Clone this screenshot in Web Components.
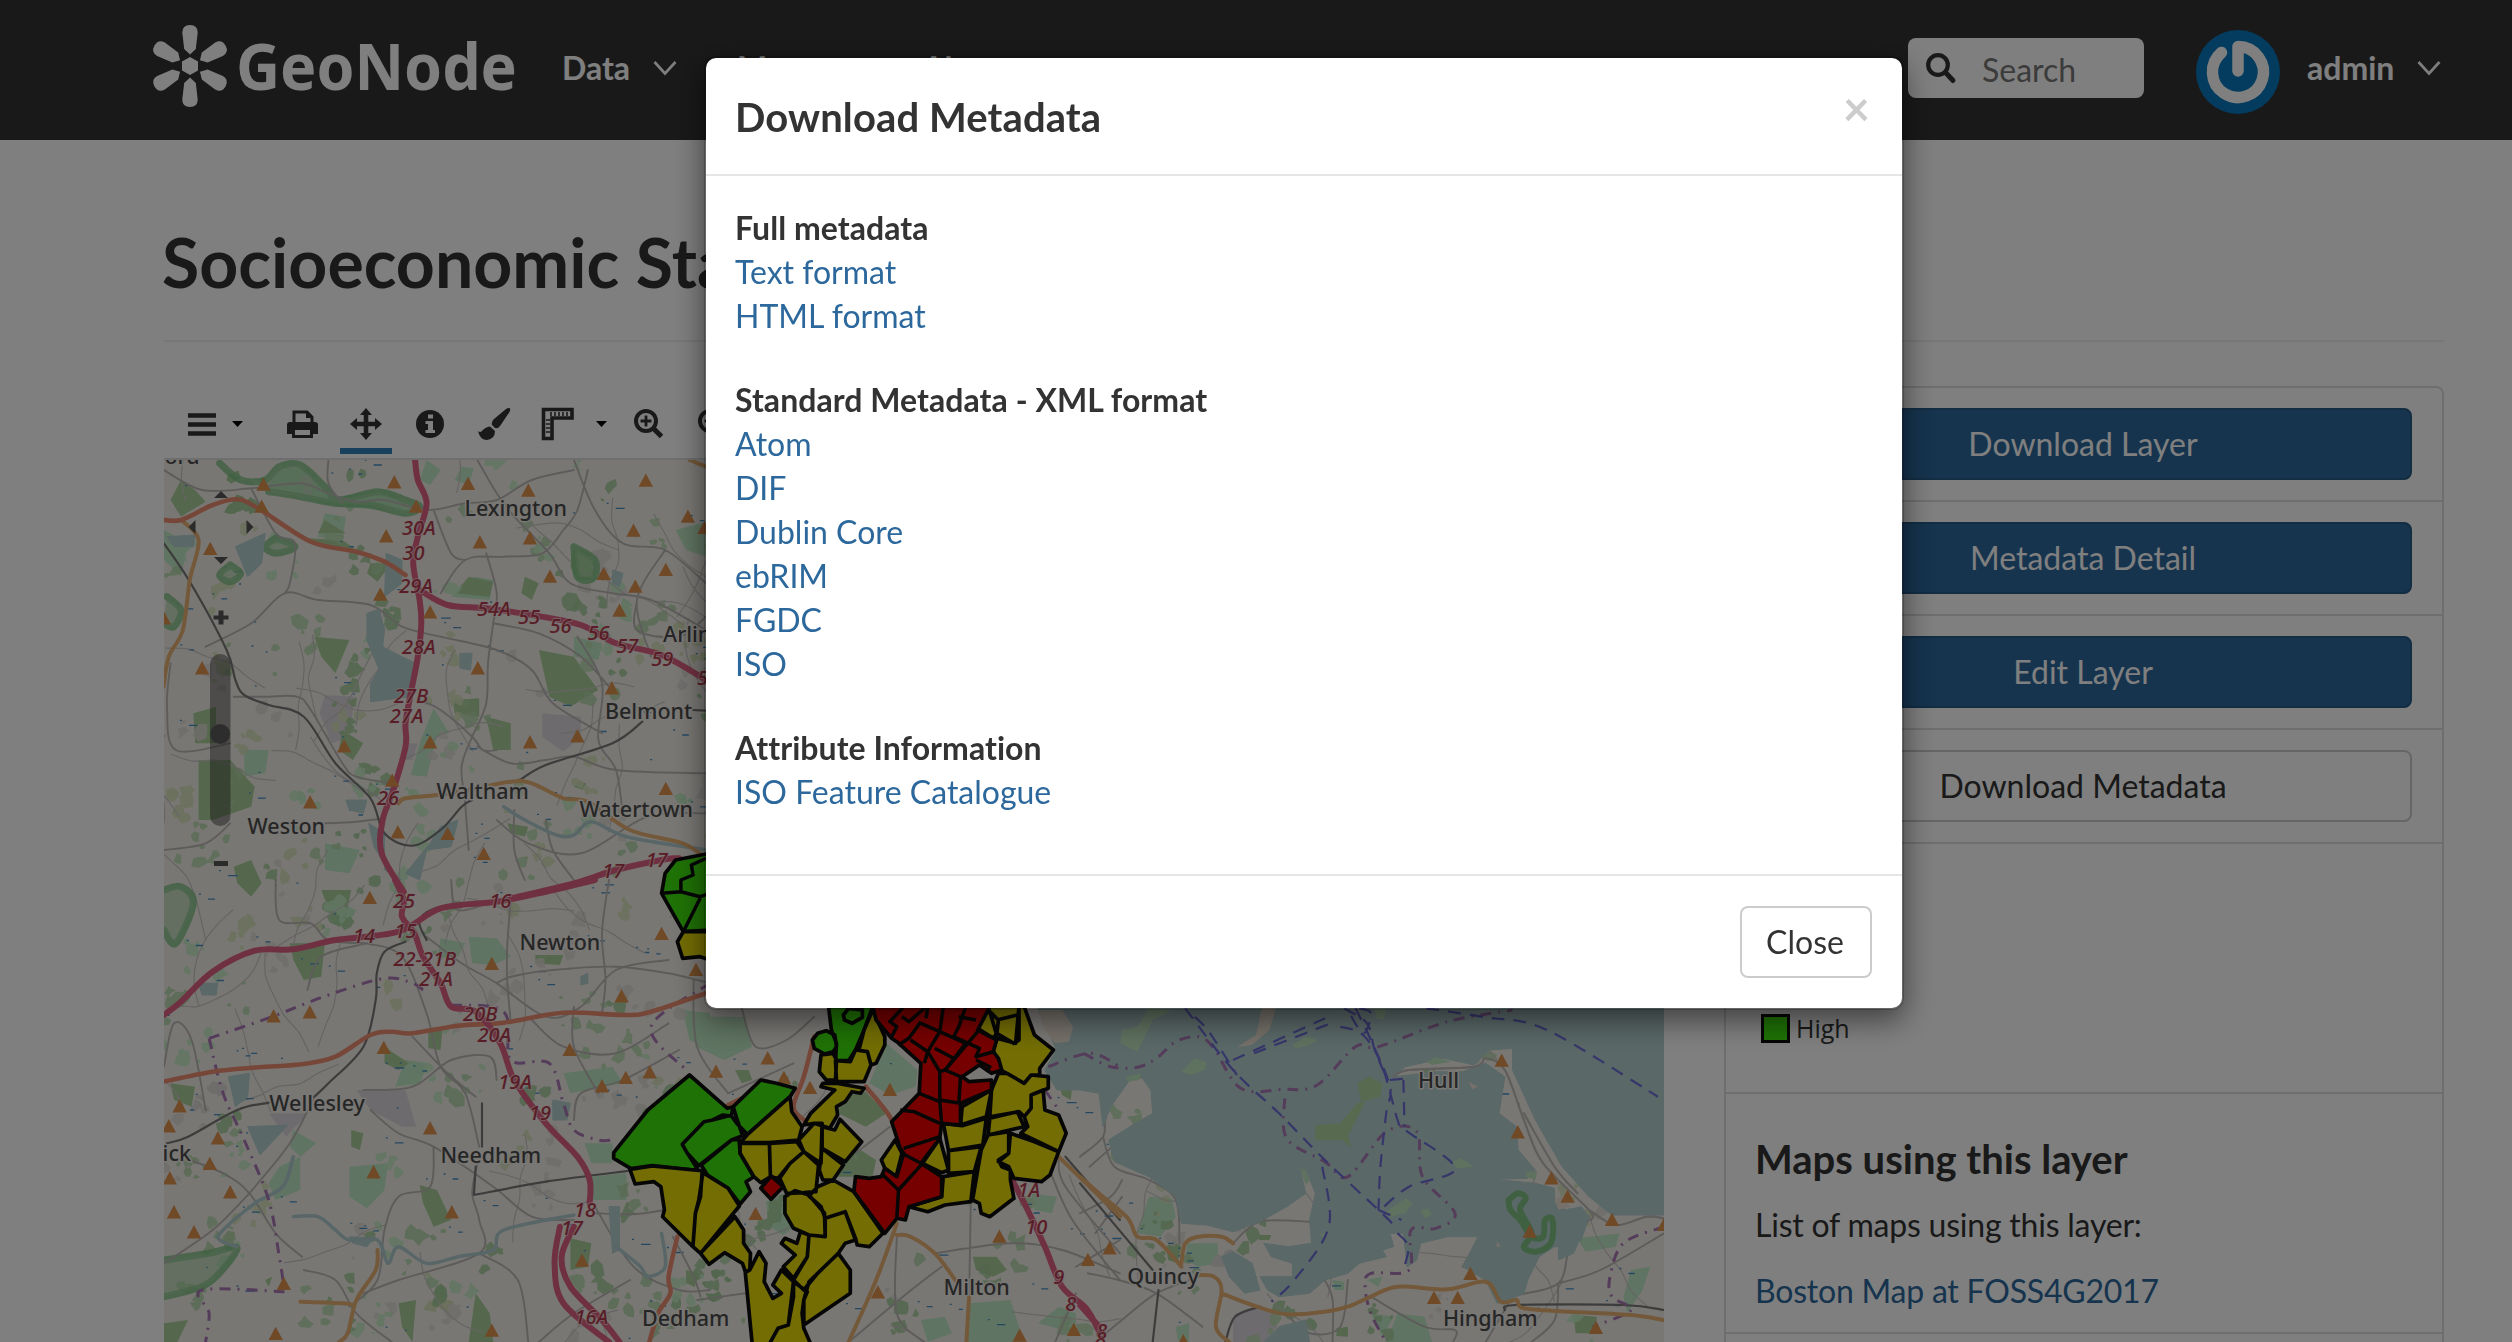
<!DOCTYPE html>
<html lang="en">
<head>
<meta charset="utf-8">
<title>GeoNode - Download Metadata</title>
<style>
html{overflow:hidden}
body{margin:0;width:2608px;height:1342px;overflow:hidden;background:#fff;color:#333;font:32px/44px Lato,"Liberation Sans",sans-serif;font-variant-ligatures:no-common-ligatures}
</style>
</head>
<body>
<gn-app></gn-app>
<script>
const define = (name, html, setup) => customElements.define(name, class extends HTMLElement {
  connectedCallback() {
    if (this.shadowRoot) return;
    const t = document.createElement('template');
    t.innerHTML = html;
    this.attachShadow({mode: 'open'}).append(t.content.cloneNode(true));
    if (setup) setup.call(this, this.shadowRoot);
  }
});

/* ---------- icons ---------- */
const ICONS = {
  chevron: [24, 16, '<path d="M1.5 2 12 13.5 22.500 2" fill="none" stroke="currentColor" stroke-width="2.600"/>'],
  caret: [11, 6, '<path d="M0 0h11L5.500 6z" fill="#000"/>'],
  search: [30, 30, '<circle cx="12" cy="12" r="9.800" fill="none" stroke="currentColor" stroke-width="4.200"/><path d="M20 20l7 7.500" stroke="currentColor" stroke-width="5" stroke-linecap="round"/>'],
  menu: [28, 24, '<path d="M0 3.500h28M0 12.500h28M0 21.500h28" stroke="currentColor" stroke-width="4.600"/>'],
  print: [31, 28, '<path d="M7 13V2h13l5 5v6" fill="none" stroke="currentColor" stroke-width="3"/><path d="M19 1v7h7z" fill="currentColor"/><path d="M3 12h25q3 0 3 3v9h-5v-4H5v4H0v-9q0-3 3-3z" fill="currentColor"/><path d="M6.500 19v7.500h18V19" fill="none" stroke="currentColor" stroke-width="3"/>'],
  move: [32, 32, '<path d="M16 5v22M5 16h22" stroke="currentColor" stroke-width="4.600"/><path d="M16 0l6 7H10zM16 32l6-7H10zM0 16l7-6v12zM32 16l-7-6v12z" fill="currentColor"/>'],
  info: [28, 28, '<circle cx="14" cy="14" r="14" fill="currentColor"/><path d="M12 4.500h5v4h-5zM9.500 11H17v9h2v3H9.500v-3h2.500v-6H9.500z" fill="#fff"/>'],
  brush: [32, 32, '<path d="M31.500 0q1.500 1 0 4L22 18q-2 3-5 2l-3-3q-1-3 2-6L28 1q2-1.500 3.500-1z" fill="currentColor"/><path d="M12 18.500l5 4.500q0 8-8 9-7 0-9-9 2 2 4 0 3-4 8-4.500z" fill="currentColor"/>'],
  ruler: [32, 32, '<path d="M1.500 1.500h28.500v8.500H10v20.500H1.500z" fill="none" stroke="currentColor" stroke-width="3.600"/><path d="M9 4v4M13 4v4M17 4v4M21 4v4M25 4v4M4 12h4M4 16h4M4 20h4M4 24h4" stroke="currentColor" stroke-width="1.600"/>'],
  zoomin: [30, 30, '<circle cx="12" cy="12" r="10" fill="none" stroke="currentColor" stroke-width="4"/><path d="M12 6.500v11M6.500 12h11" stroke="currentColor" stroke-width="2.800"/><path d="M19.500 19.500l8 8" stroke="currentColor" stroke-width="5"/>'],
  zoomout: [30, 30, '<circle cx="12" cy="12" r="10" fill="none" stroke="currentColor" stroke-width="4"/><path d="M6.500 12h11" stroke="currentColor" stroke-width="2.800"/><path d="M19.500 19.500l8 8" stroke="currentColor" stroke-width="5"/>'],
  avatar: [84, 84, '<circle cx="42" cy="42" r="42" fill="#0678bd"/><path d="M25.500 22.500A25.500 25.500 0 1 0 42 16.500V41" fill="none" stroke="#fff" stroke-width="11.500" stroke-linecap="round" stroke-linejoin="round"/>']
};
define('gn-icon', '<style>:host{display:block;flex:none}svg{display:block;overflow:visible}</style>', function (r) {
  const [w, h, body] = ICONS[this.getAttribute('name')];
  r.innerHTML += `<svg width="${w}" height="${h}" viewBox="0 0 ${w} ${h}">${body}</svg>`;
});

/* ---------- navbar ---------- */
define('gn-logo', `<style>:host{display:block;flex:none}svg{display:block}</style>
<svg width="368" height="90" viewBox="150 21 368 90" fill="#fff">
  <defs><path id="p" d="M182.300 32.500q0-7.500 7.700-7.500t7.700 7.500L195.800 49 190 54.500 184.200 49z"/></defs>
  <use href="#p"/><use href="#p" transform="rotate(60 190 66)"/><use href="#p" transform="rotate(120 190 66)"/>
  <use href="#p" transform="rotate(180 190 66)"/><use href="#p" transform="rotate(240 190 66)"/><use href="#p" transform="rotate(300 190 66)"/>
  <path d="M190 57l8 4.500v9l-8 4.500-8-4.500v-9z"/>
  <text x="236" y="90" textLength="281" lengthAdjust="spacingAndGlyphs" font-family="Noto Sans" font-weight="700" font-size="65">GeoNode</text>
</svg>`);
define('gn-nav-item', `<style>:host{display:flex;align-items:center;font-weight:700;color:#fff;gap:23px}</style>
<slot></slot><gn-icon name="chevron"></gn-icon>`);
define('gn-search', `<style>:host{display:flex;align-items:center;box-sizing:border-box;width:236px;height:60px;border-radius:8px;background:#fff;padding-left:18px;gap:26px;color:#333}
span{color:#777;padding-top:4px}</style><gn-icon name="search"></gn-icon><span><slot></slot></span>`);
define('gn-navbar', `<style>
:host{display:flex;height:140px;background:#333;box-sizing:border-box;align-items:flex-start;padding-left:150px}
gn-logo{margin-top:21px}nav{display:flex;gap:60px;margin:46px 0 0 44px}nav gn-nav-item:first-child{--w:1}
.right{display:flex;align-items:flex-start;margin-left:auto;width:700px}
gn-search{margin-top:38px}gn-icon{margin:30px 0 0 52px}.user{margin:46px 0 0 27px}
</style><gn-logo></gn-logo>
<nav><gn-nav-item>Data</gn-nav-item><gn-nav-item>Maps</gn-nav-item><gn-nav-item>About</gn-nav-item></nav>
<div class="right"><gn-search>Search</gn-search><gn-icon name="avatar"></gn-icon><gn-nav-item class="user">admin</gn-nav-item></div>`);

/* ---------- toolbar ---------- */
define('gn-toolbar', `<style>
:host{display:flex;height:60px;border-bottom:2px solid #ddd;box-sizing:border-box;padding-left:24px;color:#333}
div{display:flex;align-items:center;height:48px}
.on{border-bottom:6px solid #2d80b8;padding:0 10px;margin-left:22px}
</style>
<div><gn-icon name="menu"></gn-icon><gn-icon name="caret" style="margin-left:16px"></gn-icon></div>
<div style="margin-left:44px"><gn-icon name="print"></gn-icon></div>
<div class="on"><gn-icon name="move"></gn-icon></div>
<div style="margin-left:24px"><gn-icon name="info"></gn-icon></div>
<div style="margin-left:34px"><gn-icon name="brush"></gn-icon></div>
<div style="margin-left:32px"><gn-icon name="ruler"></gn-icon><gn-icon name="caret" style="margin-left:22px"></gn-icon></div>
<div style="margin-left:27px"><gn-icon name="zoomin"></gn-icon></div>
<div style="margin-left:34px"><gn-icon name="zoomout"></gn-icon></div>`);

/* ---------- map ---------- */
/* Four survey sheets; each has an origin and its own units per pixel. */
const SHEETS = {
  A: [160, 450, 2.851, 3], B: [160, 880, 2.851, 3],
  C: [580, 980, 2.904, 3], D: [1080, 980, 2.613, 3]
};
const at = (s, x, y) => { const [ox, oy, sx, sy] = SHEETS[s]; return [ox + x / sx, oy + y / sy]; };
const pts = (s, str) => str.trim().split(/\s+/).map(p => at(s, ...p.split(',').map(Number)));
const poly = (s, str) => 'M' + pts(s, str).map(p => p.map(n => n.toFixed(1)).join(' ')).join('L') + 'Z';
const curveOf = p => {
  let d = `M${p[0][0].toFixed(1)} ${p[0][1].toFixed(1)}`;
  for (let i = 0; i < p.length - 1; i++) {
    const a = p[i - 1] || p[i], b = p[i], c = p[i + 1], e = p[i + 2] || c;
    d += `C${[b[0] + (c[0] - a[0]) / 6, b[1] + (c[1] - a[1]) / 6, c[0] - (e[0] - b[0]) / 6, c[1] - (e[1] - b[1]) / 6, c[0], c[1]].map(n => n.toFixed(1)).join(' ')}`;
  }
  return d;
};
const line = (s, str) => curveOf(pts(s, str));
const each = (set, fn) => Object.entries(set).map(([s, l]) => l.map(v => fn(s, v)).join('')).join('');

const MOTORWAY = {
  A: ['727,30 735,90 760,160 735,260 722,340 740,450 745,520 735,620 715,730 700,820 700,890 665,1020 635,1110 632,1210 695,1325',
      '740,420 820,465 930,475 1060,495 1200,525 1300,580 1430,615 1557,690', '1000,1345 1180,1300 1300,1260 1440,1228 1480,1225'],
  B: ['670,0 695,60 690,110 725,160 750,230 800,310 830,380 900,395 970,490 1010,600 1100,730 1190,830 1225,900 1225,970',
      '1140,1040 1125,1150 1150,1270 1280,1386', '1180,1040 1145,1130 1170,1220 1260,1320 1310,1386',
      '11,405 60,365 150,275 270,212 380,208 500,180 680,155 800,85 960,65 1100,35 1240,0'],
  C: ['1250,590 1300,690 1350,800 1400,920 1470,985 1510,1060'], D: ['0,975 50,1040']
};
const TRUNK = {
  A: ['0,208 60,210 150,165 220,148 280,175 430,275 560,305 640,335 700,375'],
  B: ['0,607 150,575 280,562 410,552 500,530 600,465 660,455 720,460 850,437 980,428 1150,398 1320,405 1400,395 1568,335',
      '1475,1070 1450,1190 1455,1240 1420,1300 1395,1386'],
  C: ['680,170 650,290 620,380 650,420', '830,320 900,410 940,500', '430,375 480,350']
};
const PRIMARY = {
  A: ['60,210 110,270 85,390 65,540 25,620 10,710', '680,1060 700,1045 790,1035 880,1020 1000,995 1060,1000 1150,1045 1220,1055 1340,1140 1490,1180 1557,1225', '1510,30 1557,50'],
  B: ['620,1110 615,1170 560,1260 535,1360 510,1386', '400,1265 520,1270 550,1275'],
  C: ['920,730 860,900 780,1086', '920,765 960,770 1030,820 1090,900', '1130,950 1122,1086', '1370,510 1450,590 1568,710'],
  D: ['0,590 60,650 125,715 150,770 200,780 265,860', '265,850 275,790 310,770 370,770 400,790', '310,885 350,890 370,930 355,1040 390,1086',
      '370,940 450,975 540,1003 640,995 700,980 760,950 830,920 960,928 1060,905 1100,965 1140,960 1160,985 1280,995 1440,1005 1526,1020']
};
const RAIL = {
  A: ['11,280 85,395 190,600 215,690 240,735 310,765 410,800 500,940 600,1045 640,1150 720,1187 800,1140 860,1070 890,1050', '1020,995 1100,945 1290,880 1375,815', '1520,780 1557,782', '1000,1342 1180,1305 1250,1280'],
  B: ['700,185 640,215 618,280 615,360 580,500 480,610 440,650', '310,668 220,690 80,770 20,790', '760,180 740,120 800,80 960,65', '895,945 1100,905 1340,872', '918,670 918,800', '895,945 900,860'],
  C: ['1410,530 1568,720'], D: ['0,610 190,870', '1110,990 1140,975 1420,975 1526,990', '380,1086 405,1010 470,980', '205,930 190,1086']
};
const ROADS = {
  A: ['11,60 120,120 260,115 400,100 480,130 560,155 640,150 760,180 870,160 960,150 1060,90 1180,60', '480,30 480,100 520,160', '260,115 330,250 385,280 370,400 355,430',
      '130,590 260,520 355,430 450,450 600,465 690,530 800,560 960,600 1060,660 1120,760 1260,850', '800,430 870,330 980,320 1090,310 1150,240 1190,180 1220,60', '930,310 960,430 950,520 935,640 930,760 890,860',
      '780,180 830,310 870,330', '905,30 960,130 1010,200 1110,310 1170,400 1290,430 1400,450 1557,540', '1180,30 1240,180 1320,280 1440,300 1557,400', '950,520 1080,550 1200,620 1280,710',
      '740,750 800,780 890,860 920,900 960,900', '890,860 860,950 870,1060 880,1200', '11,1200 130,1180 200,1120', '210,740 300,740 390,740 430,780 520,940 560,980 660,1000',
      '905,890 1000,940 1100,930 1180,920 1300,960 1557,970', '960,1110 1050,1180 1200,1210 1390,1100 1557,1090', '1360,450 1360,540 1480,560 1557,500', '1190,560 1260,700 1250,870 1300,960 1320,1100',
      '470,1120 560,1115 640,1105', '30,640 20,770 45,900 200,880', '1010,1080 1010,1200 1040,1290', '1100,1110 1120,1200 1180,1290', '1440,300 1360,450 1400,620'],
  B: ['11,560 40,430 90,480 130,690', '330,0 340,120 430,130 480,180 590,190', '590,190 690,230 760,400 800,560 870,640 910,800', '830,0 850,90 960,60', '760,170 860,250 960,310 1100,410 1200,380 1300,270 1450,240',
      '960,310 1000,290 1120,270 1300,260 1450,280 1568,310', '1000,60 990,200 990,300 1000,430', '1280,0 1260,160 1270,300 1260,400', '420,330 460,230 590,190', '600,690 680,760 780,800 950,920 1060,1010 1180,1020',
      '780,800 770,920 680,950 640,1050 620,1200 540,1280', '60,830 180,880 255,940 330,1060 405,1130', '255,940 150,1050 11,1150', '440,650 370,790 255,940', '905,850 890,940 910,1020 910,1120 680,1200 580,1240',
      '910,1120 1020,1200 1050,1386', '1340,1200 1180,1300 1080,1386', '1180,720 1200,640 1320,600 1480,510', '580,630 720,620 830,540 940,530 960,600', '720,470 820,580 900,650', '410,1170 500,1200 560,1300 660,1386',
      '1060,420 1150,500 1300,520 1450,430', '1180,380 1180,500 1250,640', '1240,1000 1380,1000 1568,960', '1240,980 1350,1160 1480,1230 1568,1230'],
  C: ['470,85 510,200 600,180 680,110', '330,0 340,200 430,340', '430,340 620,250', '270,770 330,890 350,950', '920,770 920,1000 1000,1086', '1030,820 1250,790 1400,810 1568,880', '1440,860 1568,780',
      '780,1086 950,940 1050,860', '1135,665 1130,950', '1390,530 1410,620 1568,820', '1360,560 1430,720 1568,900', '1480,560 1568,480', '340,960 480,940', '800,520 900,440', '1440,940 1380,1086'],
  D: ['0,530 60,470 70,400 130,300 270,290', '60,470 90,560 180,600 250,660 260,790', '0,700 80,650 110,600', '40,760 110,650', '20,880 100,900 200,940 320,1040', '310,890 200,940 120,1010 40,1086',
      '400,790 470,725 600,725', '640,900 660,960 660,1086', '760,950 900,1040 980,1050 975,1086', '1000,860 1030,800', '1330,720 1280,800 1250,910 1140,945', '1250,910 1360,870 1526,760', '1250,910 1240,1020 1180,1086',
      '820,290 860,270 1030,260 1060,235 1110,270 1160,420 1210,550 1330,690 1335,720', '1330,690 1400,735 1480,710 1526,715', '1160,400 1240,560 1300,640', '1120,970 1060,1086', '540,1003 600,1060 680,1040 700,900']
};
const BOUNDARY = {
  B: ['140,475 320,410 480,345 640,295 720,310 750,330', '140,475 180,640 240,780 310,960 340,1130 355,1230', '355,1235 120,1230 140,1300 130,1386',
      '830,375 980,395 1000,540 1110,550 1150,670 1180,750 1250,780 1290,780', '1568,310 1400,440 1500,570'],
  C: ['1360,260 1480,220 1568,260', '1350,330 1390,390'],
  D: ['10,220 80,260 150,262 200,235 250,185 310,170 350,205 420,325 530,328 620,315 720,200 780,200 960,125 1130,90',
      '535,355 540,475 640,545 700,590 800,455 880,455 895,590 980,700 930,745 865,750 860,870 760,880 745,920 760,1000 800,1086', '1526,740 1420,790 1385,890 1390,950 1440,990 1340,1040']
};
const FERRY = {
  D: ['275,85 400,270 520,400 640,540 780,690 820,735', '300,110 340,160 410,285', '400,240 650,110', '455,220 650,132', '720,85 760,180 810,320 800,400 785,560 780,690', '690,85 750,130 770,210 800,290',
      '680,140 740,165 790,260 830,420 850,450 980,565 860,620 785,690', '845,300 848,440', '905,85 1060,112 1220,150 1510,350', '633,560 650,740 560,900 500,965', '830,760 858,800 845,870', '730,85 760,100 740,160 700,90', '810,300 845,296', '780,690 840,720']
};
const WATER = {
  A: ['590,490 625,478 640,540 635,590 690,620 730,640 715,740 600,755 600,700 625,660 590,570', '215,290 300,250 290,340 250,380', '20,260 100,255 95,290 40,290', '645,310 690,330 690,400 640,440', '855,610 890,610 885,660 855,655', '595,1120 640,1150 640,1260 690,1290 650,1260 610,1190', '800,1130 850,1110 830,1190 760,1200 740,1290 700,1270 770,1180', '530,1050 590,1050 580,1090 540,1080', '1290,360 1320,370 1310,410 1290,400'],
  B: ['250,740 365,735 285,825', '195,590 255,580 250,650 215,680', '110,310 165,310 160,345 120,345', '540,1070 610,1075 590,1100 550,1090', '1120,660 1170,670 1160,720 1120,720', '1280,980 1310,980 1310,1110 1290,1120', '1200,290 1220,280 1220,310 1200,315'],
  D: ['-112,80 1526,80 1526,705 1460,705 1390,705 1330,650 1260,560 1190,420 1130,270 1130,205 1070,210 1030,255 950,235 850,260 820,290 860,285 930,275 1000,275 1060,250 1110,290 1095,400 1140,440 1145,510 1190,570 1170,595 1080,598 1190,610 1240,625 1240,670 1270,690 1310,680 1330,710 1310,780 1270,800 1240,800 1200,830 1170,900 1160,940 1120,960 1090,970 1060,900 1000,860 1040,770 960,770 890,790 880,840 855,860 845,760 810,760 820,800 790,810 800,830 730,850 700,880 640,900 600,940 520,950 490,930 470,890 555,890 555,850 500,830 480,790 545,800 605,790 600,720 615,640 590,570 575,565 590,640 540,680 470,725 400,755 330,735 265,730 250,650 180,590 90,545 75,480 130,440 190,400 185,330 160,290 130,300 80,380 60,440 50,340 0,330 -60,330 -92,270 -62,210 -90,130',
      '370,830 400,815 450,850 470,930 430,940 390,890', '480,1086 520,1040 590,1020 600,1086', '1250,700 1330,710 1290,820 1250,840']
};
const RIVER = {
  A: ['980,1070 1040,1110 1130,1155 1180,1155 1230,1115 1330,1160 1557,1200'],
  B: ['380,1010 450,1010 500,1050 540,1080 620,1080 650,1150 680,1100 760,1150 850,1130 950,1110 980,1050 1180,1005', '380,830 350,920 270,970 180,1050 170,1080 220,1100', '1430,1060 1440,1160 1390,1190 1370,1160 1300,1100']
};
const PARK = {
  A: ['900,380 950,390 940,450 830,440', '780,775 825,850 790,860 760,980 715,975 740,880', '1180,560 1260,580 1250,630 1180,620', '400,60 500,140 640,120 740,175 620,180 480,165 380,130 300,120 340,60', '470,190 530,200 520,270 450,260', '1470,240 1557,215 1557,320 1500,300', '240,900 310,900 300,970 240,980', '470,1180 570,1200 540,1270 470,1260', '760,30 800,60 770,105 740,90', '860,50 895,55 880,105 840,90', '11,240 80,280 60,380 11,330', '350,50 430,60 400,110'],
  B: ['800,175 870,190 850,230 790,235', '880,170 960,175 1000,230 950,255 890,250', '540,860 650,850 640,930 590,985 540,950', '340,860 400,830 400,930 330,960 310,910', '1150,580 1290,560 1320,610 1170,640', '700,540 765,550 740,610 670,620', '1230,890 1330,880 1330,960 1230,960', '380,750 445,790 400,830 370,800', '490,60 560,90 530,145 490,130', '1490,390 1568,400 1568,510 1510,480', '1210,790 1290,790 1290,850 1230,850'],
  C: ['370,110 480,110 500,200 420,240 335,200 330,160', '540,665 590,640 625,740 590,765 550,740', '890,190 980,270 975,320 900,345 840,310', '1130,970 1250,960 1290,1086 1120,1086', '1310,640 1385,650 1370,700 1320,690', '990,1020 1060,1010 1080,1060 1010,1086', '1390,980 1440,1000 1440,1060 1330,1030'],
  D: ['280,790 360,790 360,850 310,860 275,840', '180,650 240,655 250,710 210,770 150,760', '830,1000 900,1010 920,1086 800,1086', '760,1000 820,1010 790,1070', '1300,775 1410,760 1400,800 1320,815', '1440,870 1490,860 1470,930 1430,1000 1420,950', '660,900 690,905 690,930 665,930', '750,900 790,890 780,920', '250,1040 285,1030 285,1086 255,1080']
};
const ISLE = {
  D: ['180,85 240,90 190,120 150,215 105,190 110,150 150,140', '265,275 300,235 330,245 325,270 290,285', '120,290 160,280 155,300 125,305', '555,195 590,170 620,180 600,195 565,205', '970,545 995,535 1030,560 985,565', '795,700 850,655 870,670 850,700 810,712', '890,690 910,685 918,705 900,715', '905,245 930,232 970,245 920,255', '770,85 800,90 795,120 775,115', '575,565 590,570 600,600 590,615', '1165,575 1195,575 1190,600 1165,590', '625,762 640,758 635,770']
};
const SAND = { D: ['475,85 512,85 495,150 450,195 410,202 460,165', '1015,305 1040,320 1025,328', '1240,655 1260,650 1280,680 1250,690', '1090,785 1100,800 1088,800'], C: ['1330,90 1400,90 1432,140 1420,185 1380,190 1350,150'] };
const WOOD = {
  A: ['60,90 100,120 130,155 60,200 30,150', '420,265 520,270 560,300 430,280', '880,380 950,395 940,440 840,430', '1180,290 1245,320 1240,390 1190,390 1170,350', '440,560 540,570 500,670 460,620', '600,340 660,340 620,395 590,370', '95,790 160,770 160,880 100,880', '110,930 200,930 270,1010 260,1070 150,1110 110,1110', '1080,600 1180,620 1250,720 1170,770 1110,740', '835,750 910,745 910,800 840,790', '930,800 1000,820 1000,900 950,900', '520,840 580,880 550,930 510,900', '1040,380 1080,400 1060,450 1030,430', '1190,995 1215,1000 1205,1020 1180,1010', '990,1120 1050,1130 1040,1160 1000,1150', '210,1250 260,1230 290,1300 260,1340 220,1300', '470,210 530,250 450,250'],
  B: ['370,190 470,190 460,290 410,300 380,240', '765,450 805,450 800,510 765,505', '740,915 790,930 830,1020 780,1040 750,970', '1170,1075 1230,1090 1220,1160 1170,1170', '640,500 710,550 680,570 640,550', '30,610 100,620 90,680 40,660', '545,750 580,760 570,810 545,800', '680,1270 730,1260 720,1386 690,1340', '900,1240 940,1300 950,1386 880,1386', '1500,1170 1535,1180 1525,1220 1500,1210', '1070,225 1150,225 1140,255 1070,250', '300,1200 320,1190 310,1220', '460,30 545,30 530,110 470,60', '11,1330 80,1320 50,1386 11,1386'],
  C: ['760,350 830,335 890,400 830,440 750,400', '800,500 860,540 850,590 740,590', '1140,830 1210,830 1240,870 1200,890 1150,870', '1390,310 1430,315 1425,360 1400,345', '450,270 490,270 500,300 470,310', '310,870 345,890 330,920 310,910'],
  D: ['725,310 755,290 790,310 785,350 735,365', '725,370 745,365 700,470 710,505 685,480 615,480 615,435 680,430', '1290,1005 1350,1010 1350,1060 1295,1060', '225,800 245,780 265,800 255,850 230,840', '470,765 500,765 495,780 470,780', '670,1045 700,1040 700,1070 670,1068']
};
const RIM = {
  A: ['170,40 230,90 300,90 340,50 400,45 470,110 510,150 620,125 700,150 740,170 700,190 600,165 500,160 400,140 310,125', '330,265 385,290 330,310 300,290 330,265', '200,345 230,370 200,395 170,375 200,345', '20,440 60,480 40,530 11,520', '1180,290 1240,330 1235,385 1190,380 1180,290'],
  B: ['11,30 60,20 95,70 45,190 11,150', '11,1140 140,1120 220,1105 150,1200 90,1230 11,1250'],
  D: ['1120,660 1145,640 1165,655 1150,690 1180,760 1160,800 1190,815 1230,790 1235,720 1215,720 1210,770 1180,770 1150,720 1125,690 1120,660']
};
const TOWN_GREY = { A: ['470,735 555,740 540,860 490,880 455,790', '1090,790 1200,800 1200,860 1150,905 1090,860', '700,880 735,880 720,930 695,930'], B: ['560,630 700,630 730,740 690,740 600,690', '310,700 420,700 360,770'], D: ['400,1010 450,985 515,1000 515,1040 480,1086 400,1086'] };
const PEAKS = {
  A: '295,102 290,168 143,295 645,257 628,432 668,95 730,168 878,100 1050,120 1385,90 1505,198 1350,240 912,275 1055,263 1112,378 1265,370 1442,358 1355,408 770,485 1310,480 120,653 906,653 1288,713 525,887 770,875 1055,875 1190,857 662,990 428,1055 678,1145 820,1150 923,1210 1442,1015 1552,232 11,503',
  B: '598,52 1430,160 946,250 1528,268 1316,347 427,395 324,407 638,502 1168,508 1396,575 1328,592 1260,617 56,677 25,737 165,773 770,743 142,850 609,875 28,893 200,935 832,995 40,995 97,1055 1203,1140 353,1210 946,1350 330,1360',
  C: '545,233 395,273 592,292 668,322 900,328 510,700 865,935 1218,768 1475,838 1538,803 1434,1048 1277,1065',
  D: '1102,240 1144,455 1232,593 1274,648 1390,718 1175,753 1020,880 925,952 987,952 1348,1042 1526,733 270,1082'
};
const TOWNS = {
  A: [['Lexington', 1014, 178], ['Arlin', 1503, 555], ['Belmont', 1393, 785], ['Waltham', 920, 1027], ['Watertown', 1358, 1080], ['Weston', 360, 1130], ['ford', 52, 22]],
  B: [['Newton', 1140, 190], ['Wellesley', 448, 672], ['Needham', 943, 827], ['Natick', -5, 823]],
  C: [['Dedham', 307, 1018], ['Milton', 1152, 925]],
  D: [['Quincy', 217, 890], ['Hull', 937, 303], ['Hingham', 1072, 1017]]
};
const EXITS = {
  A: [['30A', 738, 233], ['30', 723, 310], ['29A', 730, 407], ['54A', 952, 478], ['55', 1052, 502], ['56', 1142, 527], ['56', 1250, 548], ['57', 1332, 588], ['59', 1432, 628], ['59', 1562, 685], ['28A', 738, 590], ['27B', 716, 737], ['27A', 703, 798], ['26', 650, 1043], ['17', 1292, 1262], ['17', 1416, 1230]],
  B: [['25', 696, 62], ['15', 700, 153], ['14', 582, 167], ['16', 970, 62], ['22-21B', 755, 238], ['21A', 787, 297], ['20B', 913, 403], ['20A', 953, 465], ['19A', 1012, 605], ['19', 1083, 698], ['18', 1212, 990], ['17', 1175, 1043], ['16A', 1230, 1310]],
  C: [['1A', 1303, 630], ['10', 1325, 740], ['9', 1390, 890], ['8', 1425, 972]],
  D: [['8', 56, 1052], ['8', 54, 1076]]
};
const GREEN = '#3ee40c', YELLOW = '#e6da08', RED = '#ec0000';
const TRACTS = [
  [GREEN, 'C', ['318,285 428,385 445,380 440,405 385,420 360,425 297,493 312,520 340,565 330,570 210,557 148,566 98,535 98,518 197,390', '445,380 525,300 570,310 625,325 610,350 490,460 470,460 455,415',
    '297,493 360,425 385,420 415,405 440,408 455,430 485,462 440,480 345,557 312,520', '352,555 440,480 462,478 465,520 505,590 482,605 495,635 465,672 430,625 370,585',
    '722,80 850,80 825,150 800,210 780,242 742,242 745,190 730,150', '765,105 780,85 820,90 820,112 790,130 768,120', '715,152 740,165 745,200 735,215 710,222 680,205 675,180 690,160']],
  [YELLOW, 'C', ['145,568 210,558 330,570 355,572 350,650 335,700 328,800 240,710 245,690 235,620 215,605 160,612', '357,578 430,625 463,678 350,820 328,800 335,700 345,660', '350,820 450,710 475,750 475,790 495,820 493,870 480,875 472,850 420,818 375,853',
    '480,878 493,870 520,815 540,850 535,905 560,955 585,940 560,915 585,870 620,905 620,950 605,1035 575,1045 550,1092 500,1092', '490,460 610,350 615,395 645,440 635,480 550,488 465,488', '465,490 550,490 553,590 525,608 505,590 465,520',
    '550,490 630,485 650,515 610,550 575,595 553,590', '580,595 610,550 650,515 693,555 685,635 650,638 600,640', '635,480 680,430 703,430 700,550 650,515', '703,440 740,450 755,418 818,485 770,545 703,505', '703,505 765,555 735,600 705,600 695,570',
    '650,435 670,400 740,330 700,320 705,310 745,310 825,325 815,340 790,335 770,365 745,380 748,405 725,445 680,430', '700,225 735,220 745,240 742,300 715,300 695,275', '742,242 785,245 800,210 835,215 845,255 825,305 745,305', '850,90 885,170 885,195 860,250 845,255 835,215 810,210 825,150',
    '595,650 625,632 665,645 710,700 712,770 665,765 620,745 595,700', '665,648 690,620 735,600 795,635 880,760 840,800 805,795 800,775 770,695 712,715 700,680', '712,715 770,695 800,780 770,790 750,820 690,880 650,930 620,900 660,830 665,765 712,770', '665,765 660,830 620,895 590,860 625,825 585,790 595,775 630,790 640,755',
    '750,820 785,870 785,940 650,1035 650,960 665,905 690,880', '620,905 660,935 650,960 645,1000 650,1045 670,1092 550,1092 575,1045 605,1035', '1190,80 1275,80 1275,180 1260,190 1210,160 1200,175 1155,145', '1190,95 1215,120 1210,165', '1275,80 1290,80 1320,165 1375,210 1335,265 1335,285 1310,285 1290,310 1240,280 1220,270 1200,210 1210,175 1265,190',
    '1215,280 1240,280 1290,310 1310,285 1360,290 1360,325 1310,345 1310,385 1290,410 1275,395 1190,410 1195,330', '1310,345 1345,330 1350,390 1390,405 1412,460 1390,515 1320,480 1280,460 1300,440 1290,410 1310,385', '1190,415 1270,395 1290,440 1185,465',
    '1185,465 1245,455 1245,520 1215,540 1225,560 1250,570 1250,600 1260,655 1190,710 1165,700 1160,670 1140,660 1165,510', '1250,460 1320,485 1390,515 1365,585 1340,605 1260,595 1245,560 1215,545 1245,520', '1055,430 1110,437 1180,415 1170,495 1070,512', '1110,380 1195,330 1180,410 1105,435',
    '1070,512 1165,500 1145,575 1070,580', '1055,590 1145,575 1135,665 1060,675 1010,695 955,680 1050,650', '995,550 1045,475 1070,570 1050,578', '875,540 915,480 935,520 918,590 885,565']],
  [RED, 'C', ['850,80 860,120 905,175 920,185 990,250 985,340 905,425 930,505 940,520 920,590 885,565 875,590 840,595 800,590 795,635 885,760 920,715 945,720 955,680 1050,650 1050,590 990,550 1045,475 1050,430 1105,435 1105,370 1195,330 1195,300 1130,305 1110,290 1160,255 1195,280 1225,270 1215,235 1200,215 1210,180 1155,150 1190,80', '555,588 590,620 555,658 525,625']],
  [GREEN, 'B', ['1430,40 1440,-20 1470,-60 1568,-80 1568,150 1492,155']],
  [YELLOW, 'B', ['1492,155 1568,155 1568,240 1540,230 1490,235 1475,185']]
];
const TRACT_LINES = {
  A: ['1557,1225 1515,1245 1520,1275 1485,1290 1485,1325', '1430,1330 1485,1325 1540,1340 1568,1330'],
  B: ['1492,155 1540,55'],
  C: ['940,80 900,125 920,140 905,170', '1000,85 955,125 935,110', '990,125 955,175 925,195', '985,128 1045,155 1010,215 960,180', '1055,80 1045,155', '1045,155 1120,190 1060,270 1045,275 1010,215 1000,250', '1045,275 1045,360 1105,370', '1120,80 1100,140 1085,170 1160,205 1150,230 1200,215', '1030,205 1085,235', '1150,120 1100,110', '1155,155 1060,270 1105,290 1100,370', '930,390 970,395 1045,430', '985,340 1045,365 1050,430', '940,505 1045,470', '935,520 990,550', '875,580 925,630 920,715', '925,630 995,550', '1150,240 1190,260 1180,275', '1010,80 1005,115', '1210,120 1270,105']
};

let seed = 77;
const rnd = () => (seed = (seed * 1103515245 + 12345) & 0x7fffffff) / 0x7fffffff;
const blob = (x, y, r) => {
  const n = 7, p = [];
  for (let i = 0; i < n; i++) { const a = i / n * 6.283, q = r * (.45 + rnd() * .8); p.push([x + Math.cos(a) * q, y + Math.sin(a) * q]); }
  return 'M' + p.map(v => v.map(k => k.toFixed(1)).join(' ')).join('L') + 'Z';
};
function scatter() {
  let out = '';
  const cols = ['#b9dcae', '#c3ecc6', '#a6cc9a', '#d6e2b8', '#dedad6', '#b4d6a8'];
  for (let i = 0; i < 460; i++) {
    const x = 164 + rnd() * 1500, y = 460 + rnd() * 882, c = cols[Math.floor(rnd() * cols.length)];
    let d = ''; const k = 2 + Math.floor(rnd() * 5);
    for (let j = 0; j < k; j++) d += blob(x + (rnd() - .5) * 34, y + (rnd() - .5) * 40, 2 + rnd() * 7);
    out += `<path d="${d}" fill="${c}" opacity=".85"/>`;
  }
  let minor = '';
  for (let i = 0; i < 150; i++) {
    let x = 164 + rnd() * 1500, y = 460 + rnd() * 882, a = rnd() * 6.283; const p = [[x, y]];
    for (let j = 0; j < 5; j++) { a += (rnd() - .5) * .9; x += Math.cos(a) * 22; y += Math.sin(a) * 22; p.push([x, y]); }
    minor += curveOf(p);
  }
  out += `<path d="${minor}" fill="none" stroke="#cbc8c4" stroke-width="1.200"/>`;
  let marsh = '', specks = '';
  for (let i = 0; i < 330; i++) { const x = 164 + rnd() * 1500, y = 460 + rnd() * 882; specks += `M${x.toFixed(1)} ${y.toFixed(1)}h2`; if (i % 3) marsh += `M${(x + 9).toFixed(1)} ${(y + 5).toFixed(1)}h${(4 + rnd() * 6).toFixed(1)}`; }
  return out + `<path d="${marsh}${specks}" stroke="#4a90c4" stroke-width="1.300" fill="none"/>`;
}
function mapMarkup() {
  const fill = (set, c, extra = '') => `<path fill="${c}" ${extra} d="${each(set, poly)}"/>`;
  const stroke = (set, c, w, extra = '') => `<path fill="none" stroke="${c}" stroke-width="${w}" stroke-linecap="round" ${extra} d="${each(set, line)}"/>`;
  const peaks = Object.entries(PEAKS).map(([s, v]) => pts(s, v).map(([x, y]) => `M${(x - 7.2).toFixed(1)} ${(y + 6.8).toFixed(1)}h14.400l-7.200-13.400z`).join('')).join('');
  const label = (cls, dy) => (s, [t, x, y]) => { const [px, py] = at(s, x, y); return `<text class="${cls}" x="${px.toFixed(1)}" y="${(py + dy).toFixed(1)}">${t}</text>`; };
  return fill(TOWN_GREY, '#dcd6dc') + fill(PARK, '#bfe8c4') + fill(WOOD, '#abd09d')
    + scatter()
    + stroke(RIM, '#7fc083', 7, 'opacity=".8"') + fill(RIM, '#9fcf9f', 'opacity=".5"')
    + stroke(ROADS, '#bcb9b5', 1.9)
    + fill(WATER, '#b4d0d0', 'stroke="#b4d0d0" stroke-width="1"') + stroke(RIVER, '#b0cdd0', 3.5)
    + fill(ISLE, '#bfe3bf') + fill(SAND, '#eae0d2') + fill({D: WOOD.D.slice(0, 2)}, '#b0d49e')
    + stroke({D: RIM.D}, '#7fc083', 6) + stroke({D: [ROADS.D[13], ROADS.D[14], ROADS.D[15]]}, '#c0bdb8', 1.9)
    + stroke(RAIL, '#787878', 2.2)
    + stroke(BOUNDARY, '#a878b4', 3, 'stroke-dasharray="11 7 2 7" style="stroke-linecap:butt"')
    + stroke(FERRY, '#6c6cd4', 2.2, 'stroke-dasharray="13 9" style="stroke-linecap:butt"')
    + stroke(PRIMARY, '#e6b072', 4) + stroke(TRUNK, '#ec8e70', 4.6) + stroke(MOTORWAY, '#df6284', 6)
    + `<path d="${peaks}" fill="#e0924e"/>`
    + each(TOWNS, label('town', 7)) + each(EXITS, label('exit', 6.8))
    + TRACTS.map(([c, s, l]) => `<path fill="${c}" stroke="#0c0c0c" stroke-width="3.700" stroke-linejoin="round" d="${l.map(v => poly(s, v)).join('')}"/>`).join('')
    + `<path fill="none" stroke="#0c0c0c" stroke-width="3.500" stroke-linejoin="round" d="${each(TRACT_LINES, (s, v) => poly(s, v).replace('Z', ''))}"/>`
    + `<g fill="#565656"><path d="M221 491l7 7h-14zM221 564l7-7h-14zM188.500 527l7-7v14zM253.500 527l-7-7v14z"/><path d="M218.500 610.500h5v5h5v4h-5v5h-5v-5h-5v-4h5zM214 861h14v5h-14z"/></g>
       <rect x="210" y="654" width="20.500" height="172" rx="10" fill="#222" opacity=".42"/><circle cx="220.200" cy="734" r="10" fill="#5a5a5a"/>`;
}
define('gn-map', `<style>:host{display:block;height:882px;overflow:hidden}svg{display:block;background:#f2efe9}
text{font-family:"Noto Sans","Open Sans",sans-serif;text-anchor:middle;paint-order:stroke;stroke-linejoin:round}
.town{font-size:21.500px;font-weight:500;fill:#4c4c4c;stroke:#f2efe9;stroke-width:3px}
.exit{font-size:20px;font-style:italic;font-weight:500;fill:#b03a4c;stroke:#f2e4e0;stroke-opacity:.65;stroke-width:2px}</style>
<svg width="1500" height="882" viewBox="164 460 1500 882"></svg>`, function (r) { r.querySelector('svg').innerHTML = mapMarkup(); });

/* ---------- side panel ---------- */
define('gn-button', `<style>:host{display:flex;align-items:center;justify-content:center;box-sizing:border-box;height:72px;border-radius:8px;border:2px solid #ccc;color:#333;background:#fff;padding-right:2px}
:host([primary]){background:#2c689c;border-color:#265a87;color:#fff}</style><slot></slot>`);
define('gn-row', `<style>:host{display:block;box-sizing:border-box;padding:20px 30px;border-bottom:2px solid #ddd}</style><slot></slot>`);
define('gn-panel', `<style>:host{display:block;box-sizing:border-box;width:720px;height:1100px;border:2px solid #ddd;border-radius:8px;overflow:hidden}
.legend{height:250px;display:flex;align-items:flex-end;padding:0 35px 49px}
.entry{display:flex;align-items:center;gap:6px;font:25px/28px "Open Sans",sans-serif}
span{position:relative;top:-1px}
i{box-sizing:border-box;width:29px;height:29px;background:#3ee40c;border:3px solid #0c0c0c}
.maps{height:240px;padding:43px 29px 0}h4{margin:0;font-size:40px;line-height:44px;font-weight:700}p{margin:22px 0 0;letter-spacing:-.22px}a{color:#2c689c}</style>
<gn-row><gn-button primary>Download Layer</gn-button></gn-row>
<gn-row><gn-button primary>Metadata Detail</gn-button></gn-row>
<gn-row><gn-button primary>Edit Layer</gn-button></gn-row>
<gn-row><gn-button>Download Metadata</gn-button></gn-row>
<gn-row class="legend"><div class="entry"><i></i><span>High</span></div></gn-row>
<gn-row class="maps"><h4>Maps using this layer</h4><p>List of maps using this layer:</p><p><a>Boston Map at FOSS4G2017</a></p></gn-row>`);

/* ---------- modal ---------- */
define('gn-links', `<style>:host{display:block;margin-bottom:40px}b,::slotted(a){display:block}b{letter-spacing:.05px}::slotted(a){color:#2c689c}</style><b></b><slot></slot>`,
  function (r) { r.querySelector('b').textContent = this.getAttribute('heading'); });
define('gn-modal', `<style>:host{position:fixed;left:0;top:0;width:2608px;height:1342px;background:rgba(0,0,0,.5);display:flex;justify-content:center;align-items:flex-start}
section{box-sizing:border-box;width:1200px;height:954px;margin-top:56px;border:2px solid rgba(0,0,0,.2);border-radius:12px;background:#fff;background-clip:padding-box;box-shadow:0 10px 30px rgba(0,0,0,.5);display:flex;flex-direction:column}
header{flex:none;display:flex;justify-content:space-between;height:116px;border-bottom:2px solid #e5e5e5;padding:0 30px 0 29px}
h4{margin:34px 0 0;font-size:40px;line-height:50px;font-weight:700;letter-spacing:.1px}
.x{font-size:47px;line-height:42px;font-weight:700;color:#ccc;margin:29px 2px 0 0}
main{flex:1 1 0;min-height:0;box-sizing:border-box;padding:30px 29px 0}
footer{flex:none;display:flex;justify-content:flex-end;height:102px;border-top:2px solid #e5e5e5;padding:30px 30px 0}
gn-button{width:132px}</style>
<section><header><h4>Download Metadata</h4><span class="x">×</span></header>
<main><slot></slot></main><footer><gn-button>Close</gn-button></footer></section>`);

define('gn-app', `<style>:host{display:block;height:1342px;overflow:hidden}
.page{width:2280px;margin:0 auto}
h1{margin:0;padding-top:81px;height:119px;border-bottom:2px solid #eee;font-size:68px;line-height:82px;font-weight:700;white-space:nowrap;text-indent:-2px}
.cols{display:flex;justify-content:space-between}.left{width:1500px;padding-top:58px}gn-panel{margin-top:44px}</style>
<gn-navbar></gn-navbar>
<div class="page"><h1>Socioeconomic Status</h1>
<div class="cols"><div class="left"><gn-toolbar></gn-toolbar><gn-map></gn-map></div><gn-panel></gn-panel></div></div>
<gn-modal>
  <gn-links heading="Full metadata"><a>Text format</a><a>HTML format</a></gn-links>
  <gn-links heading="Standard Metadata - XML format"><a>Atom</a><a>DIF</a><a>Dublin Core</a><a>ebRIM</a><a>FGDC</a><a>ISO</a></gn-links>
  <gn-links heading="Attribute Information"><a>ISO Feature Catalogue</a></gn-links>
</gn-modal>`);
</script>
</body>
</html>
